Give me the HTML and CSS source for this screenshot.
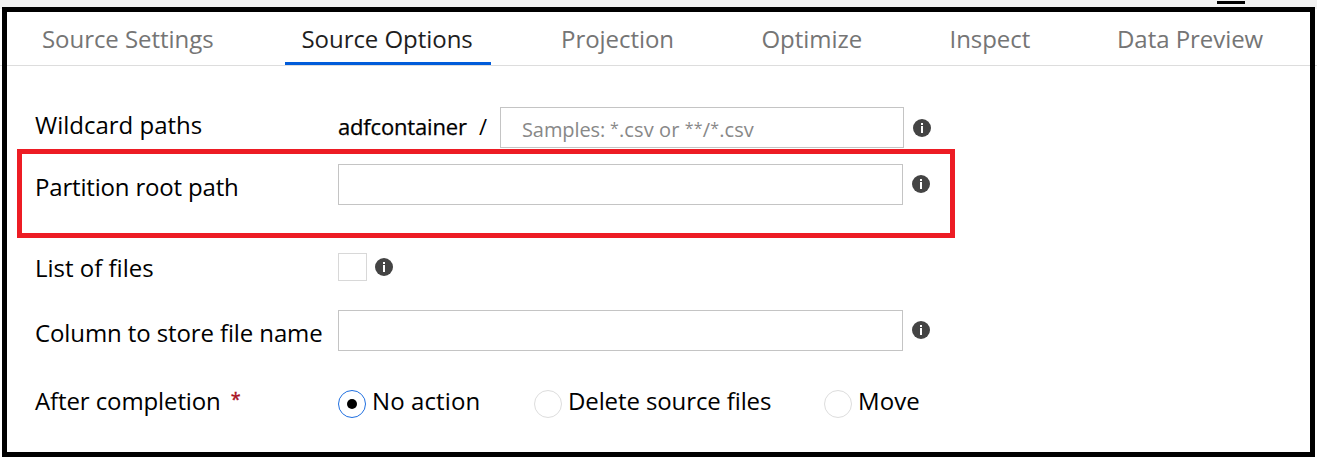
FILE: index.html
```html
<!DOCTYPE html>
<html lang="en">
<head>
<meta charset="utf-8">
<title>Source Options</title>
<link rel="stylesheet" href="styles.css">
</head>
<body>
<svg class="defs" width="0" height="0" aria-hidden="true">
  <symbol id="info" viewBox="0 0 18 18">
    <circle cx="9" cy="9" r="9" fill="#444"/>
    <path d="M8 4h2v2H8zM8 7h2v7H8z" fill="#fff"/>
  </symbol>
</svg>
<div class="page">
  <div class="topbar"><span class="handle"></span></div>
  <div class="tabstrip">
    <div class="tab tab-settings">Source Settings</div>
    <div class="tab tab-options active">Source Options</div>
    <div class="tab tab-projection">Projection</div>
    <div class="tab tab-optimize">Optimize</div>
    <div class="tab tab-inspect">Inspect</div>
    <div class="tab tab-preview">Data Preview</div>
  </div>
  <div class="form">
    <div class="row row-wildcard">
      <div class="label">Wildcard paths</div>
      <div class="container-name">adfcontainer</div>
      <div class="slash">/</div>
      <div class="input input-samples"><span class="word">Samples:</span><span class="pattern"><i class="star">*</i>.csv or <i class="star">*</i><i class="star">*</i>/<i class="star">*</i>.csv</span></div>
      <svg class="info"><use href="#info"/></svg>
    </div>
    <div class="row row-partition">
      <div class="label tight">Partition root path</div>
      <div class="input"></div>
      <svg class="info"><use href="#info"/></svg>
    </div>
    <div class="row row-list">
      <div class="label">List of files</div>
      <div class="checkbox"></div>
      <svg class="info"><use href="#info"/></svg>
    </div>
    <div class="row row-column">
      <div class="label snug">Column to store file name</div>
      <div class="input"></div>
      <svg class="info"><use href="#info"/></svg>
    </div>
    <div class="row row-after">
      <div class="label snug">After completion<span class="required">*</span></div>
      <div class="choice choice-none"><span class="radio selected"></span><span class="choice-text wide">No action</span></div>
      <div class="choice choice-delete"><span class="radio"></span><span class="choice-text">Delete source files</span></div>
      <div class="choice"><span class="radio"></span><span class="choice-text wide">Move</span></div>
    </div>
  </div>
  <div class="frame"></div>
</div>
</body>
</html>
```
FILE: styles.css
```css
* { box-sizing: border-box; }
body {
  margin: 0;
  background: #fff;
  color: #000;
  font: 24px/32px "Open Sans", "Noto Sans", sans-serif;
  white-space: nowrap;
}
.defs { position: absolute; }
.page {
  position: relative;
  width: 1317px;
  height: 458px;
  overflow: hidden;
}
/* Heavy outline lying over the panel */
.frame {
  position: absolute;
  inset: 7px 2px 1px 2px;
  border: 5px solid #000;
}
.topbar {
  display: flex;
  justify-content: flex-end;
  height: 9px;
  padding: 1px 72px 0 0;
  background: #f1f1f1;
}
.handle { width: 28px; height: 3px; background: #000; }
.tabstrip {
  display: flex;
  height: 57px;
  padding: 14px 0 0 24px;
  border-bottom: 1px solid #ddd;
}
.tab { height: 42px; color: #757575; letter-spacing: -0.05px; }
.tab-settings { width: 261px; padding-left: 18px; }
.tab-options { width: 206px; padding-left: 16.5px; }
.tab-projection { width: 229px; padding-left: 70px; }
.tab-optimize { width: 228px; padding-left: 41.5px; }
.tab-inspect { width: 168px; padding-left: 1.5px; }
.tab-preview { padding-left: 1px; }
.tab.active {
  color: #1e1e1e;
  border-bottom: 3px solid #015cda;
}
.row { display: flex; align-items: flex-start; padding-left: 35px; }
.label { width: 303px; flex: none; }
.tight { letter-spacing: -0.18px; }
.snug { letter-spacing: -0.11px; }
.input {
  width: 565px;
  height: 41px;
  border: 1px solid #c4c4c4;
  background: #fff;
}
.info { width: 18px; height: 18px; margin: 11px 0 0 9px; flex: none; }
.row-wildcard { padding-top: 41px; height: 83px; }
.row-wildcard .label { padding-top: 2px; }
.container-name {
  width: 141px;
  padding-top: 3px;
  font-size: 22px;
  letter-spacing: -0.17px;
  -webkit-text-stroke: 0.25px #000;
}
.slash { width: 21px; padding-top: 3px; font-size: 22px; }
.input-samples {
  display: flex;
  width: 404px;
  padding: 6px 0 0 21px;
  color: #888;
  font-size: 20px;
}
.word { width: 88px; letter-spacing: -0.1px; }
.pattern { letter-spacing: 0.1px; }
.star {
  display: inline-block;
  width: 9px;
  font-style: normal;
  font-size: 16px;
  line-height: 16px;
  vertical-align: 3px;
}
.row-wildcard .info { margin-top: 12px; }
.row-partition {
  width: 938px;
  height: 89px;
  margin-left: 17px;
  padding: 10px 0 0 13px;
  border: 5px solid #ed1c24;
}
.row-partition .label { padding-top: 7px; }
.row-list { height: 72px; padding-top: 15px; }
.row-list .label { margin-top: -1px; }
.checkbox { width: 29px; height: 28px; border: 1px solid #d8d8d8; }
.row-list .info { margin: 5px 0 0 8px; }
.row-column { height: 75px; }
.row-column .label { padding-top: 7px; }
.required {
  margin-left: 10px;
  color: #a80f1e;
  font-size: 18px;
  line-height: 18px;
  vertical-align: 4px;
  -webkit-text-stroke: 0.4px #a80f1e;
}
.choice { display: flex; }
.choice-none { width: 196px; }
.choice-delete { width: 290px; }
.radio {
  display: flex;
  align-items: center;
  justify-content: center;
  width: 28px;
  height: 28px;
  margin: 5px 6px 0 0;
  border: 1px solid #ddd;
  border-radius: 50%;
}
.radio.selected { border-color: #1f6fe0; }
.radio.selected::after {
  content: "";
  width: 10px;
  height: 10px;
  border-radius: 50%;
  background: #000;
}
.choice-text { letter-spacing: -0.11px; }
.wide { letter-spacing: 0.1px; }
```
